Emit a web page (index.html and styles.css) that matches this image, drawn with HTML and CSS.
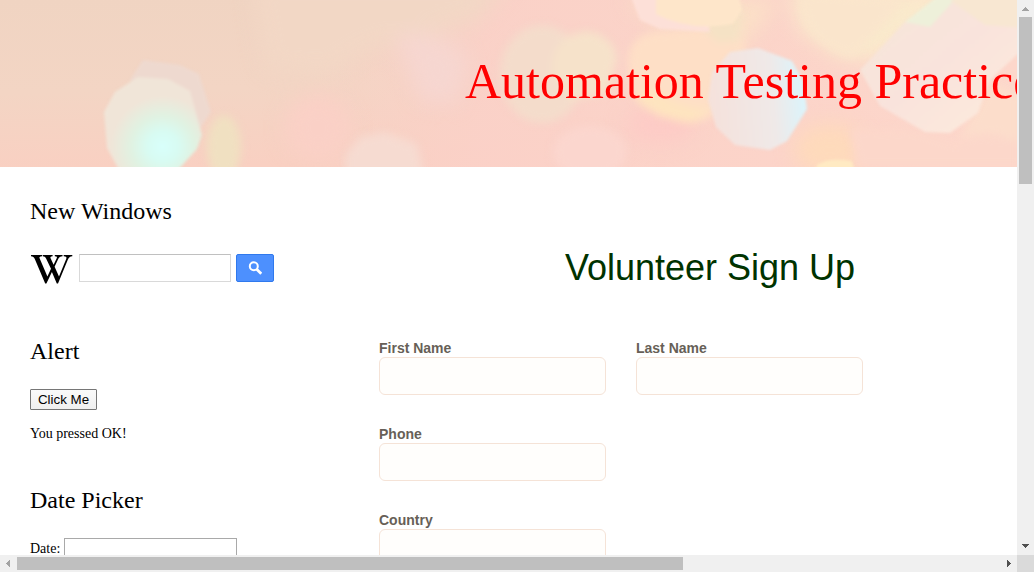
FILE: index.html
```html
<!DOCTYPE html>
<html lang="en">
<head>
<meta charset="utf-8">
<title>Automation Testing Practice</title>
<link rel="stylesheet" href="styles.css">
</head>
<body>
<div class="window">
  <div class="viewport">
    <header class="banner">
      <svg class="bokeh" viewBox="0 0 1017 167" preserveAspectRatio="none" color-interpolation-filters="sRGB" aria-hidden="true">
        <defs>
          <linearGradient id="base" x1="0" y1="0" x2="0.12" y2="1">
            <stop offset="0" stop-color="#f0d4c2"/><stop offset="0.55" stop-color="#f3d5c4"/><stop offset="1" stop-color="#f9d0c2"/>
          </linearGradient>
          <linearGradient id="right" x1="0" y1="0" x2="1" y2="0">
            <stop offset="0" stop-color="#fbd1c8" stop-opacity="0"/><stop offset="0.25" stop-color="#fbd1c8" stop-opacity="0.9"/><stop offset="1" stop-color="#fdd7cb"/>
          </linearGradient>
          <radialGradient id="cyan" cx="0.6" cy="0.73" r="0.53">
            <stop offset="0" stop-color="#d8fffb"/><stop offset="0.3" stop-color="#d8fbf2"/><stop offset="0.6" stop-color="#e0f2e2"/><stop offset="1" stop-color="#f0e5d8"/>
          </radialGradient>
          <linearGradient id="pale" x1="0" y1="0.5" x2="1" y2="0.4">
            <stop offset="0" stop-color="#f5e1db"/><stop offset="0.65" stop-color="#efe9e8"/><stop offset="1" stop-color="#d9f5fd"/>
          </linearGradient>
          <linearGradient id="fan" x1="0" y1="0" x2="1" y2="1">
            <stop offset="0" stop-color="#f5e6d8"/><stop offset="0.5" stop-color="#f9e3dc"/><stop offset="1" stop-color="#fdecdc"/>
          </linearGradient>
          <filter id="edge" x="-20%" y="-20%" width="140%" height="140%"><feGaussianBlur stdDeviation="1.8"/></filter>
          <filter id="soft" x="-20%" y="-20%" width="140%" height="140%"><feGaussianBlur stdDeviation="4"/></filter>
          <filter id="haze" x="-50%" y="-50%" width="200%" height="200%"><feGaussianBlur stdDeviation="10"/></filter>
        </defs>
        <rect width="1017" height="167" fill="url(#base)"/>
        <rect x="310" width="707" height="167" fill="url(#right)"/>
        <g filter="url(#haze)">
          <path d="M250 -20H510L480 20 370 50 330 75 265 70Z" fill="#f2d7c5"/>
          <ellipse cx="318" cy="128" rx="34" ry="34" fill="#fad0c6"/>
          <path d="M395 35Q440 25 470 60L455 105 420 100Z" fill="#f6d6d0"/>
          <path d="M625 0H780L740 50 660 25Z" fill="#fbe0c7"/>
          <path d="M790 -10H970L880 60 840 58 800 30Z" fill="#faeacc"/>
          <ellipse cx="830" cy="150" rx="36" ry="26" fill="#fedabb"/>
          <ellipse cx="660" cy="125" rx="35" ry="18" fill="#fdcbc6"/>
        </g>
        <g filter="url(#soft)">
          <ellipse cx="224" cy="147" rx="17" ry="32" fill="#f0e0c1"/>
          <ellipse cx="542" cy="74" rx="42" ry="49" fill="#f4dccb"/>
          <path d="M552 72Q550 37 585 31 613 34 617 58L606 94 570 100Z" fill="#f6e2ca"/>
          <path d="M345 155L360 137 385 132 417 144 424 175H345Z" fill="#f6dbd1"/>
          <path d="M628 60Q630 32 662 31L740 27 748 62 735 105 700 122 658 116 631 93Z" fill="#fedfc6"/>
          <path d="M635 100Q660 120 692 123L712 110Q675 108 648 85Z" fill="#fee4bf"/>
          <path d="M801 -8Q797 24 825 45L851 58 875 35 905 0Z" fill="#fae5cc"/>
          <ellipse cx="590" cy="152" rx="37" ry="26" fill="#fbd6ce"/>
          <path d="M850 128L857 168H1020V140L980 133 956 142 920 130Z" fill="#fcd7ca"/>
          <path d="M960 140Q990 125 1020 145V95L990 80Z" fill="#fcddcb"/>
          <path d="M725 5L742 8 740 40 718 43 700 25Z" fill="#f5e2c5"/>
        </g>
        <g filter="url(#edge)">
          <path d="M143 60L180 65 199 74 211 112 199 130 130 80Z" fill="#eed9cf"/>
          <path d="M104 112L115 92 138 77 168 79 190 91 202 135 197 149 176 172 120 172 107 148Z" fill="url(#cyan)"/>
          <path d="M629 -8L640 20 660 29 710 32 700 -8Z" fill="#fde0d8"/>
          <path d="M656 -8V14Q690 32 733 24L742 10 738 -8Z" fill="#fee6ca"/>
          <path d="M860 70L905 22 966 -5 1024 -5V48L990 80 978 113 950 133 925 132 880 106Z" fill="url(#fan)"/>
          <path d="M905 22L938 -4H958L930 27Z" fill="#eef0da"/>
          <path d="M950 0L970 -6H1024V28L985 25Z" fill="#f8e7d2"/>
          <path d="M712 72L730 52 758 48 792 61 803 81 807 109 787 141 770 150 735 145 716 127 708 100Z" fill="url(#pale)"/>
          <path d="M817 165Q828 157 852 161L855 172H815Z" fill="#ffeac3"/>
        </g>
      </svg>
      <h1 class="banner-title">Automation Testing Practice</h1>
    </header>
    <main class="content">
      <aside class="sidebar">
        <section class="widget widget-search">
          <h2>New Windows</h2>
          <form class="search">
            <svg class="wiki" viewBox="0 0 42 29" aria-label="Wikipedia">
              <path fill="#000" d="M0 0H11V1.2C8.5 1.3 8 2 8.7 3.6L16.4 21.5 20 13.8 15.2 3.8C14.2 1.8 13.3 1.3 11.7 1.2V0H21.6V1.2C19.4 1.4 19 2 19.7 3.6L22.6 9.7 25.6 3.6C26.4 1.9 26 1.3 23.8 1.2V0H31.5V1.2C29.2 1.4 28.3 2.1 27.2 4L23.6 11.8 28 21.5 35.2 4C36 2 35.2 1.3 32.7 1.2V0H41.3V1.2C38.9 1.5 37.9 2.4 36.8 4.8L27 28.5H25.8L20.9 16.9 15.4 28.5H14.2L3.8 4C2.9 2 2 1.3 0 1.2Z"/>
            </svg>
            <input class="search-input" type="text" aria-label="Search">
            <button class="search-button" type="button" aria-label="Search">
              <svg viewBox="0 0 14 14" width="14" height="14"><circle cx="5.8" cy="5.3" r="4" fill="none" stroke="#fff" stroke-width="2"/><path d="M8.7 8.2L13.2 12.7" stroke="#fff" stroke-width="2.7"/></svg>
            </button>
          </form>
        </section>
        <section class="widget widget-alert">
          <h2>Alert</h2>
          <button class="click-me" type="button">Click Me</button>
          <p>You pressed OK!</p>
        </section>
        <section class="widget">
          <h2>Date Picker</h2>
          <label class="date"><span>Date:</span><input type="text"></label>
        </section>
      </aside>
      <form class="signup">
        <h2>Volunteer Sign Up</h2>
        <div class="fields">
          <label class="field">First Name<input type="text"></label>
          <label class="field">Last Name<input type="text"></label>
          <label class="field field-first">Phone<input type="text"></label>
          <label class="field field-first">Country<input type="text"></label>
        </div>
      </form>
    </main>
  </div>
  <div class="scroll scroll-y">
    <svg class="arrow" viewBox="0 0 17 17" shape-rendering="crispEdges"><path d="M5 11H12L8.5 7Z" fill="#a3a3a3"/></svg>
    <div class="thumb"></div>
    <svg class="arrow" viewBox="0 0 17 17" shape-rendering="crispEdges"><path d="M5 6H12L8.5 10Z" fill="#505050"/></svg>
  </div>
  <div class="scroll scroll-x">
    <svg class="arrow" viewBox="0 0 17 17" shape-rendering="crispEdges"><path d="M10 5V12L6 8.5Z" fill="#a3a3a3"/></svg>
    <div class="thumb"></div>
    <svg class="arrow" viewBox="0 0 17 17" shape-rendering="crispEdges"><path d="M7 5V12L11 8.5Z" fill="#505050"/></svg>
  </div>
  <div class="corner"></div>
</div>
</body>
</html>
```
FILE: styles.css
```css
* { box-sizing: border-box; }
body { margin: 0; background: #fff; overflow: hidden; font-family: "Liberation Serif", "Times New Roman", serif; color: #000; }
h1, h2, p { margin: 0; font-weight: normal; }
.window { display: grid; grid-template: 555px 17px / 1017px 17px; width: 1034px; height: 572px; }
.viewport { overflow: hidden; min-width: 0; min-height: 0; }
.banner { position: relative; height: 167px; padding: 52px 0 0 465px; overflow: hidden; }
.bokeh { position: absolute; inset: 0; width: 100%; height: 100%; }
.banner-title { position: relative; font-size: 50px; line-height: 58px; color: #f00; white-space: nowrap; }
.content { display: grid; grid-template-columns: 349px 662px; padding-left: 30px; }
.sidebar { padding-top: 30px; }
.widget h2 { font-size: 24px; line-height: 28px; }
.widget-search { height: 140px; }
.widget-alert { height: 149px; }
.search { display: flex; align-items: flex-start; padding-top: 29px; }
.wiki { width: 42px; height: 29px; margin: 1px 6px 0 1px; }
.search-input { width: 152px; height: 28px; border: 1px solid #d9d9d9; border-top-color: #c0c0c0; padding: 0; }
.search-button { width: 38px; height: 28px; margin-left: 5px; padding: 0; border: 1px solid #3079ed; border-radius: 2px; background: #4d90fe; display: flex; align-items: center; justify-content: center; }
.click-me { display: block; width: 67px; height: 21px; margin-top: 24px; padding: 0; border: 1px solid #767676; border-radius: 1px; background: linear-gradient(#fafafa, #efefef); font: 13.333px "Liberation Sans", Arial, sans-serif; color: #000; }
.widget-alert p { margin-top: 15px; font-size: 14px; line-height: 18px; }
.date { display: flex; padding-top: 24px; font-size: 14px; line-height: 22px; }
.date input { width: 173px; height: 24px; margin-left: 4px; border: 1px solid #a9a9a9; }
.signup { font-family: "Liberation Sans", Arial, sans-serif; padding-top: 80px; }
.signup h2 { font-size: 36px; line-height: 42px; color: #030; text-align: center; }
.fields { display: grid; grid-template-columns: 227px 227px; column-gap: 30px; row-gap: 31px; padding-top: 51px; }
.field { display: flex; flex-direction: column; font-size: 14px; font-weight: bold; line-height: 17px; color: #675f57; height: 55px; }
.field-first { grid-column: 1; }
.field input { width: 227px; height: 38px; border: 1px solid #f5e3d7; border-radius: 6px; background: #fffefc; }
.scroll { display: flex; background: #f0f0f0; }
.scroll-y { flex-direction: column; grid-area: 1 / 2; }
.scroll-x { grid-area: 2 / 1; }
.arrow { width: 17px; height: 17px; flex: none; }
.thumb { background: #bfbfbf; }
.scroll-y .thumb { width: 13px; height: 167px; margin: 0 2px auto; }
.scroll-x .thumb { width: 666px; height: 13px; margin: 2px auto 2px 0; }
.corner { grid-area: 2 / 2; background: #dadada; }
```
